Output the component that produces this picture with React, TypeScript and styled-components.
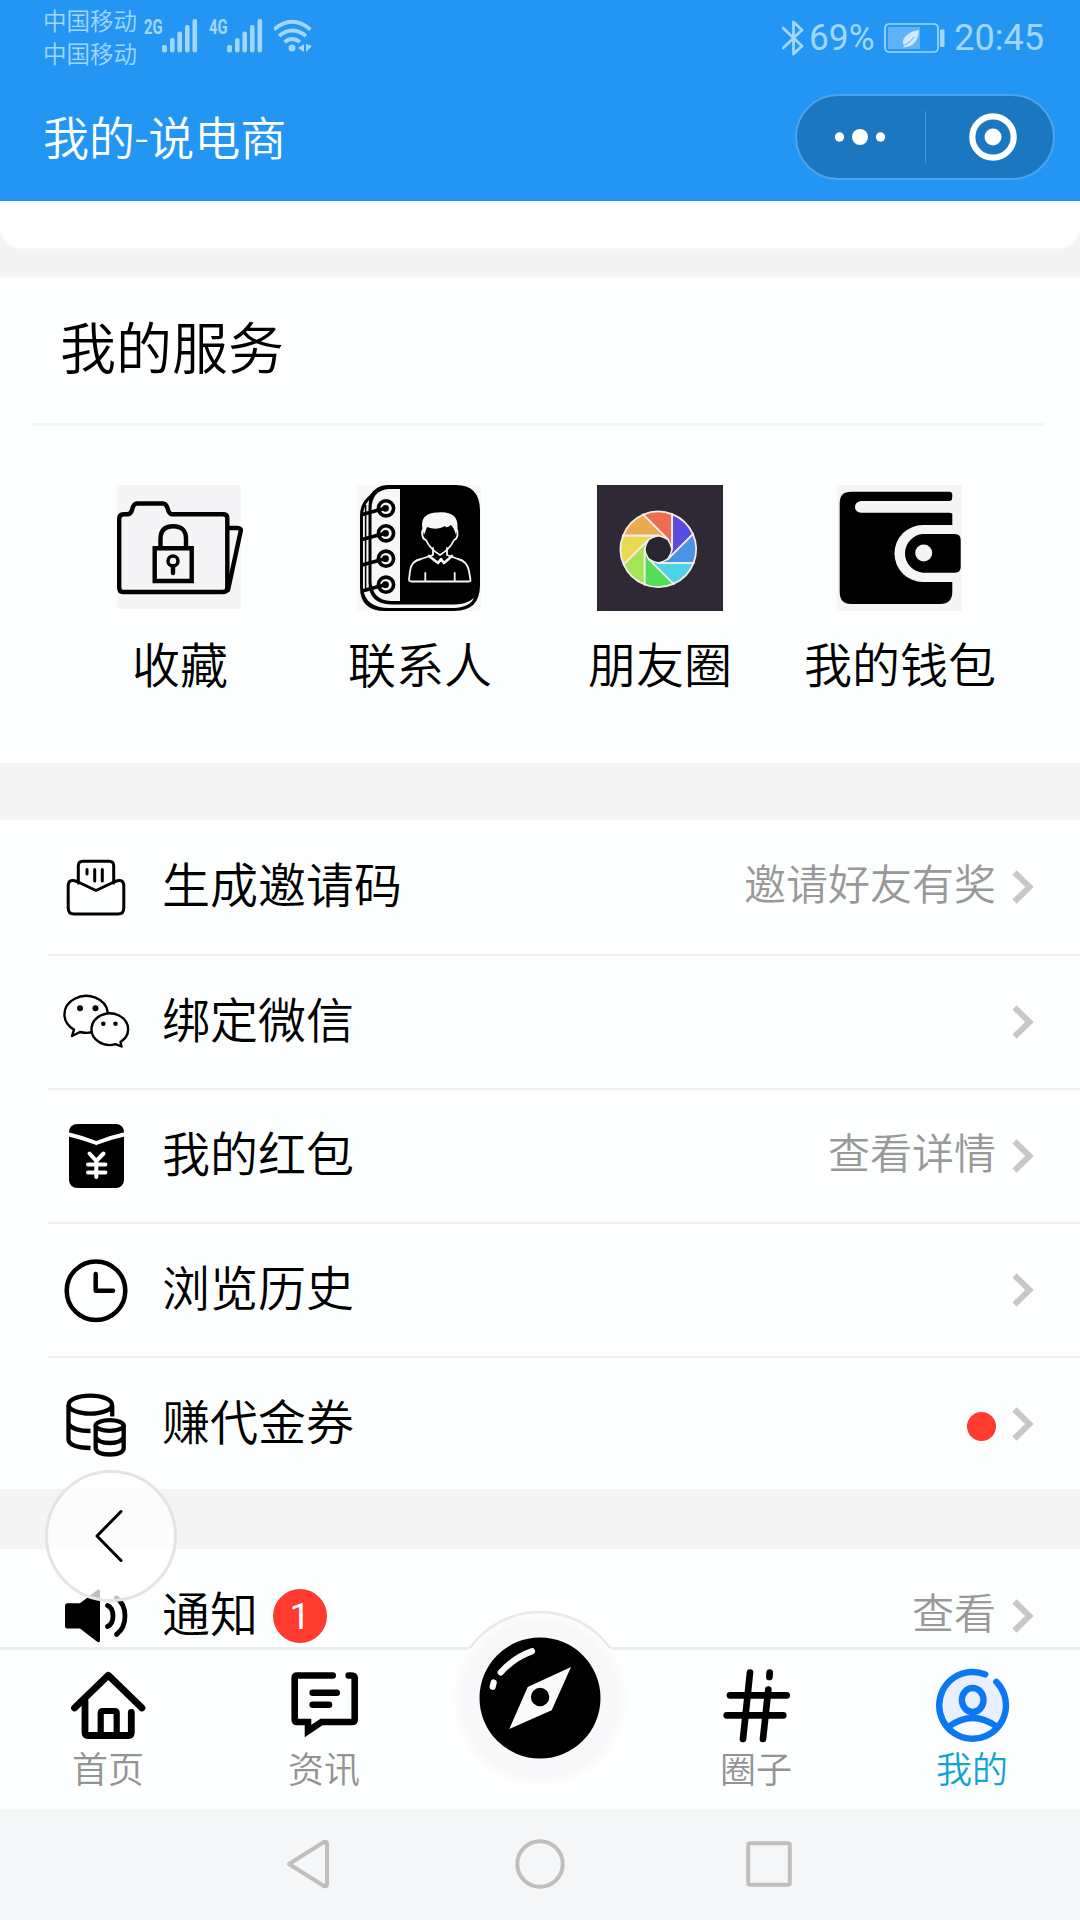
import React from "react";
import styled, { createGlobalStyle } from "styled-components";

const GlobalStyle = createGlobalStyle`
  * { box-sizing: border-box; }
  body { margin: 0; background: #fff; }
  svg { display: block; flex: none; }
`;

const STATUS = "#a3d6fb";

const Page = styled.div`
  position: relative;
  display: flex;
  flex-direction: column;
  width: 1080px;
  height: 1920px;
  overflow: hidden;
  background: #fdfefe;
  color: #000;
  font-family: Roboto, "Noto Sans CJK SC", sans-serif;
  font-weight: 350;
`;

const Header = styled.header`
  flex: none;
  height: 201px;
  background: #2396f3;
`;

const StatusBar = styled.div`
  display: flex;
  align-items: flex-start;
  height: 74px;
  padding: 0 36px 0 43px;
  color: ${STATUS};
`;

const Carriers = styled.div`
  display: flex;
  flex-direction: column;
  width: 101px;
  padding-top: 6px;
  font-size: 23.5px;
  line-height: 33px;
`;

const Network = styled.div`
  display: flex;
  width: 65px;
  padding-top: 19px;
`;

const NetworkType = styled.span`
  width: 18px;
  font-family: "Liberation Sans Narrow", Roboto, sans-serif;
  font-size: 20px;
  font-weight: 700;
  line-height: 16px;
  white-space: nowrap;
  transform: scaleX(0.74);
  transform-origin: left;
`;

const StatusRight = styled.div`
  display: flex;
  align-items: center;
  margin-left: auto;
  height: 76px;
  font-size: 36px;
  font-weight: 400;
  line-height: 42px;
`;

const Percent = styled.span`
  width: 75px;
  margin-left: 5px;
  transform: scaleX(0.98);
  transform-origin: left;
`;

const Clock = styled.span`
  margin-left: 9px;
`;

const TitleBar = styled.div`
  display: flex;
  align-items: center;
  justify-content: space-between;
  height: 125px;
  padding: 0 25px 0 43px;
`;

const Title = styled.h1`
  margin: 4px 0 0;
  color: #fff;
  font-size: 46px;
  font-weight: 350;
  line-height: 60px;
`;

const Capsule = styled.div`
  display: flex;
  align-items: center;
  width: 260px;
  height: 86px;
  border: 2px solid #4ca4ea;
  border-radius: 43px;
  background: #1b77c0;
`;

const CapsuleDivider = styled.i`
  width: 1px;
  height: 52px;
  background: #4a97d4;
`;

const CapsuleHalf = styled.div<{ $width: number; $start: number }>`
  display: flex;
  width: ${(p) => p.$width}px;
  padding-left: ${(p) => p.$start}px;
`;

const Content = styled.main`
  flex: 1;
  min-height: 0;
  overflow: hidden;
`;

const CardEnd = styled.div`
  height: 77px;
  background: #f3f3f3;
`;

const CardEndInner = styled.div`
  height: 47px;
  border-radius: 0 0 22px 22px;
  background: #fff;
  box-shadow: 0 1px 4px #fafafa;
`;

const Services = styled.section`
  height: 485px;
  background: #fdfefe;
  box-shadow: 0 -2px 5px #fafafa;
`;

const ServicesTitle = styled.h2`
  display: flex;
  align-items: center;
  height: 148px;
  margin: 0 36px 0 32px;
  padding: 0 0 13px 28px;
  border-bottom: 3px solid #f3f4f6;
  font-size: 56px;
  font-weight: 350;
`;

const ServiceGrid = styled.div`
  display: grid;
  grid-template-columns: repeat(4, 240px);
  padding: 59px 60px 0;
`;

const Service = styled.div`
  display: flex;
  flex-direction: column;
  align-items: center;
  gap: 21px;
  font-size: 48px;
  line-height: 70px;
  white-space: nowrap;
`;

const Gap = styled.div<{ $h: number }>`
  height: ${(p) => p.$h}px;
  background: #f4f4f4;
`;

const List = styled.section`
  height: 669px;
  overflow: hidden;
`;

const Row = styled.div`
  display: flex;
  align-items: center;
  height: 134px;
  margin-left: 48px;
  padding: 0 46px 0 12px;
  & + & {
    border-top: 2px solid #efeff2;
  }
  & > svg:first-child {
    margin-bottom: 2px;
  }
`;

const RowLabel = styled.span`
  margin-left: 30px;
  padding-bottom: 1px;
  font-size: 48px;
  line-height: 70px;
`;

const RowNote = styled.span`
  margin: 0 16px 3px auto;
  color: #999;
  font-size: 42px;
  line-height: 60px;
`;

const Dot = styled.i`
  width: 29px;
  height: 29px;
  margin: 5px 16px 0 auto;
  border-radius: 50%;
  background: #ff3a2f;
`;

const Badge = styled.span`
  display: flex;
  align-items: center;
  justify-content: center;
  width: 54px;
  height: 54px;
  margin-left: 15px;
  border-radius: 50%;
  background: #ff3a2f;
  color: #fff;
  font-size: 37px;
  font-weight: 400;
`;

const TabBar = styled.nav`
  position: relative;
  display: grid;
  flex: none;
  grid-template-columns: repeat(5, 216px);
  height: 162px;
  border-top: 3px solid #ebecee;
  background: #fdfefe;
`;

const Tab = styled.div<{ $active?: boolean }>`
  display: flex;
  flex-direction: column;
  gap: 1px;
  align-items: center;
  padding-top: 18px;
  color: ${(p) => (p.$active ? "#12a4d4" : "#939393")};
  font-size: 36px;
  line-height: 52px;
`;

const CompassTab = styled.div`
  display: flex;
  justify-content: center;
  margin-top: -39px;
`;

const SystemNav = styled.footer`
  display: grid;
  flex: none;
  grid-template-columns: 1fr 102px 1fr;
  align-items: center;
  height: 111px;
  padding-bottom: 2px;
  background: #f5f6f8;
`;

const NavCell = styled.div<{ $align: string; $inset: number }>`
  display: flex;
  justify-content: ${(p) => p.$align};
  padding: 0 ${(p) => p.$inset}px;
`;

const BackBubble = styled.button`
  position: absolute;
  left: 45px;
  top: 1470px;
  display: flex;
  align-items: center;
  justify-content: center;
  width: 132px;
  height: 132px;
  padding: 0 4px 0 0;
  border: 3px solid #e4e4e4;
  border-radius: 50%;
  background: rgba(255, 255, 255, 0.74);
`;

const line = {
  fill: "none",
  strokeLinecap: "round" as const,
  strokeLinejoin: "round" as const,
};

const Signal = () => (
  <svg width="36" height="34" fill={STATUS}>
    <rect x="0" y="26" width="5" height="7.5" rx="2" />
    <rect x="8" y="19" width="4.6" height="14.5" rx="2" />
    <rect x="15.4" y="12.5" width="4.6" height="21" rx="2" />
    <rect x="23" y="6" width="4.6" height="27.5" rx="2" />
    <rect x="30.5" y="0" width="4.6" height="33.5" rx="2" />
  </svg>
);

const WifiIcon = () => (
  <svg width="42" height="54" viewBox="273 0 42 54">
    <g stroke={STATUS} strokeWidth="3.8" fill="none">
      <path d="M273 29.5Q291 14 309.5 29.5" />
      <path d="M278 36Q291 25 305 36" />
      <path d="M283.5 42Q291 36 299 42" />
    </g>
    <circle cx="291" cy="48" r="3.5" fill={STATUS} />
    <path d="M303 44v8l-6-4zM305 44v8l6-6z" fill={STATUS} />
  </svg>
);

const BluetoothIcon = () => (
  <svg width="22" height="36" viewBox="0 0 22 36">
    <path d="M1 8L20 26 11.5 34V2L20 10 1 28" stroke={STATUS} strokeWidth="2.8" {...line} />
  </svg>
);

const BatteryIcon = () => (
  <svg width="61" height="30" viewBox="0 0 61 30">
    <rect x="1" y="1" width="53" height="28" rx="4" fill="none" stroke={STATUS} strokeWidth="1.7" />
    <rect x="4" y="4" width="32" height="22" fill="#5db2f8" />
    <rect x="56" y="6.5" width="4.5" height="17.5" rx="1" fill={STATUS} />
    <path d="M35 7C28 8 20 12 19 18Q18 21 21 22L19 24Q22 25 28 22 35 17 35 7z" fill="#d0eafd" />
    <path d="M21 22Q27 19 30 14" stroke="#5db2f8" fill="none" />
  </svg>
);

const FolderIcon = () => (
  <svg width="126" height="126" viewBox="0 0 126 126">
    <path d="M0 0H124V124H0z" fill="#f5f5f7" />
    <g stroke="#000" strokeWidth="4.4" {...line}>
      <path d="M2.2 34Q2.2 29.3 6.5 29.3H10Q14 29.3 15 25Q16.5 18.5 20 18.5H46Q49 18.5 50.5 23Q52 29.3 55 29.3H106Q110.3 29.3 110.3 33V103Q110.3 107 106 107H6Q2.2 107 2.2 102.5z" />
      <path d="M111 43H120Q125 43 123.5 47L111 105" />
      <path d="M37.7 63.3H74.7V96H37.7z" strokeLinejoin="miter" />
      <path d="M43.5 63V54Q43.5 41.3 56.3 41.3T69 54V63" />
      <circle cx="56" cy="76" r="5" strokeWidth="3.5" />
      <path d="M56 81V88" />
    </g>
  </svg>
);

const ContactsIcon = () => (
  <svg width="126" height="126" viewBox="0 0 126 126">
    <path d="M0 0H124V126H0z" fill="#f7f7f8" />
    <path d="M30 0H99Q123 0 123 26V100Q123 126 97 126H28Q3 126 3 102V30Q3 18 13 10Q20 0 30 0z" fill="#000" />
    <path d="M12 15Q6 21 6 32V104Q9 123 32 123H97Q113 122 117 113Q109 119.5 98 119.5H34Q12 119 11.5 98V22z" fill="#f7f7f8" />
    <path d="M8.6 20V104" stroke="#000" strokeWidth="1.6" fill="none" />
    <path d="M43 4H32Q15 5 14.5 24V96Q15 115 34 116H43z" fill="#f7f7f8" />
    {[23.3, 48.3, 73.7, 99.7].map((y) => (
      <g key={y} stroke="#000" strokeWidth="3.6" strokeLinecap="round" fill="none">
        <circle cx="29" cy={y} r="7.6" />
        <path d={`M6 ${y + 6}L28 ${y}`} />
        <circle cx="28.5" cy={y} r="1.6" />
      </g>
    ))}
    <g stroke="#f7f7f8" strokeWidth="1.8" {...line}>
      <path d="M67 44Q64 45 65.5 51 66 54 69 55 73 64 83 70 93 64 97 55 100 54 100.5 50 101 46 99.5 44" />
      <path d="M76 63V70L64 74Q54 76 53 86L52 95Q52 96 54 96.5H112Q114 96 113.5 95L112 86Q110 76 101 74L90 70V63" />
      <path d="M72 71L81 78 84 74 87 78 95 71" strokeWidth="2.6" />
      <path d="M68.3 88V96M97.7 88V96" />
    </g>
    <path d="M67 50Q65 44 65 40 65 28 80 27.5 91 26 97 31 101 35 100.5 43L99 50Q97 43 94 40 89 44 88 41 80 46 70 42 69 45 67 50z" fill="#f7f7f8" />
  </svg>
);

const BLADES = ["#ee6d50", "#5b4ce0", "#4c93e8", "#4dd2e6", "#52df55", "#a6e356", "#ead94e", "#eaaa50"];

const MomentsIcon = () => {
  const cx = 61.3;
  const cy = 64.3;
  const R = 37.8;
  const r = 13.8;
  const len = Math.sqrt(R * R - r * r);
  const edge = (deg: number) => {
    const a = (deg * Math.PI) / 180;
    const tx = cx + r * Math.cos(a);
    const ty = cy + r * Math.sin(a);
    return { t: `${tx} ${ty}`, e: `${tx + len * Math.sin(a)} ${ty - len * Math.cos(a)}` };
  };
  return (
    <svg width="126" height="126" viewBox="0 0 126 126">
      <path d="M0 0H126V126H0z" fill="#2f2935" />
      {BLADES.map((color, i) => {
        const a = edge(i * 45);
        const b = edge(i * 45 - 45);
        return (
          <path
            key={color}
            d={`M${a.t}L${a.e}A${R} ${R} 0 0 0 ${b.e}L${b.t}z`}
            fill={color}
            stroke="#f3eee8"
            strokeWidth="1.8"
          />
        );
      })}
      <circle cx={cx} cy={cy} r="12.3" fill="#2a2630" />
    </svg>
  );
};

const WalletIcon = () => (
  <svg width="126" height="126" viewBox="0 0 126 126">
    <path d="M0 0H125V126H0z" fill="#f5f5f6" />
    <path d="M14 6.7H112Q115.3 6.7 115.3 10V107Q115.3 119 103 119H14Q2.7 119 2.7 107V18Q2.7 6.7 14 6.7z" />
    <path d="M24 16H112Q115.5 16 115.5 12H118V31Q115.5 27.7 112 27.7H24Q18 27 18 22T24 16z" fill="#f5f5f6" />
    <path d="M118 40H86A28.5 28.5 0 0 0 86 97H118z" fill="#f5f5f6" />
    <path d="M86 49H118Q123.7 49 123.7 55V82Q123.7 87.7 118 87.7H86A19.4 19.4 0 0 1 86 49z" />
    <circle cx="86.7" cy="68" r="8.5" fill="#f5f5f6" />
  </svg>
);

const RowIcon = ({ children }: { children: React.ReactNode }) => (
  <svg width="72" height="72" viewBox="0 0 72 72">
    {children}
  </svg>
);

const InviteIcon = () => (
  <RowIcon>
    <g stroke="#000" strokeWidth="3" {...line}>
      <path d="M18.3 33V16Q18.3 11.2 23 11.2H49Q53.7 11.2 53.7 16V33" />
      <path d="M36 40.5L17 31.5Q8.2 28 8.2 36V58Q8.2 64 14 64H58Q63.8 64 63.8 58V36Q63.8 28 55 31.5z" />
      <path d="M27 19.5V24M34.7 19.5V31M42.3 19.5V31" />
    </g>
  </RowIcon>
);

const WechatIcon = () => (
  <RowIcon>
    <g stroke="#000" strokeWidth="2.4" strokeLinejoin="round" fill="#fdfefe">
      <path d="M14 44.6L12 51 20 47A21.7 18.4 0 1 0 14 44.6z" />
      <path d="M60.5 57L61.5 61.5 55.5 59.2A18.3 15.8 0 1 1 60.5 57z" />
    </g>
    <circle cx="20" cy="23.3" r="3" />
    <circle cx="35.5" cy="23.3" r="3" />
    <circle cx="43.3" cy="38.7" r="2.3" />
    <circle cx="55.5" cy="38.7" r="2.3" />
  </RowIcon>
);

const RedPacketIcon = () => (
  <RowIcon>
    <rect x="9" y="5" width="55" height="64" rx="8" />
    <path d="M7 15Q22 18.5 36.3 24 50 18.5 66 15" stroke="#fff" strokeWidth="4" fill="none" />
    <path d="M29.5 34.5L36.3 42 43.5 34.5M36.3 42V58M28 45.5H45.5M28 53.5H45.5" stroke="#fff" strokeWidth="4" {...line} />
  </RowIcon>
);

const HistoryIcon = () => (
  <RowIcon>
    <g stroke="#000" strokeWidth="4.5" {...line}>
      <circle cx="36" cy="37.7" r="29.3" />
      <path d="M35.7 21V37.7H53" />
    </g>
  </RowIcon>
);

const CoinsIcon = () => (
  <RowIcon>
    <g stroke="#000" strokeWidth="4.3" fill="none">
      <ellipse cx="30.3" cy="17.7" rx="21.7" ry="9" />
      <path d="M8.5 18V53Q10 60.5 30.5 61M52.2 18V29.5M8.5 37Q13 44 30.5 44" />
      <ellipse cx="49.7" cy="38.5" rx="14" ry="5.3" />
      <path d="M35.7 38V61.5Q37 67.5 49.7 67.5T63.7 61.5V38M35.7 50Q38 56 49.7 56T63.7 50" />
    </g>
  </RowIcon>
);

const SpeakerIcon = () => (
  <RowIcon>
    <path d="M7 24.3H20L38 10.5Q40 10 40 12V61Q40 64 37.5 63L20 49.5H7Q5 49.5 5 47V27Q5 24.3 7 24.3z" />
    <path d="M47.5 26.5Q53 29 53 37T47.5 47.5M56.5 19Q65 25 65 37T56.5 55.5" stroke="#000" strokeWidth="4.8" {...line} />
  </RowIcon>
);

const Chevron = () => (
  <svg width="22" height="36" viewBox="0 0 22 36">
    <path d="M2.5 3.5L17.5 18 2.5 32.5" stroke="#c8c8ca" strokeWidth="6" fill="none" />
  </svg>
);

const HomeIcon = () => (
  <svg width="76" height="76" viewBox="0 0 76 76">
    <g stroke="#000" strokeWidth="6.8" {...line}>
      <path d="M4.5 40L38.3 7.3 72 40" />
      <path d="M15 33V64.5Q15 67.5 18 67.5H58.3Q61.3 67.5 61.3 64.5V44.5" />
      <path d="M30.7 66V45Q30.7 43 33 43H44.5Q46.7 43 46.7 45V66" strokeWidth="6.2" />
    </g>
  </svg>
);

const NewsIcon = () => (
  <svg width="76" height="76" viewBox="0 0 76 76">
    <g stroke="#000" strokeWidth="6.6" {...line}>
      <path d="M46.7 7.5H11Q8.7 7.5 8.7 10V51.5Q8.7 54 11 54H22V63L35.5 54H66Q68.7 54 68.7 51.5V10Q68.7 7.5 66 7.5H62.7" strokeLinejoin="miter" />
      <path d="M26.7 24.7H50.7M26.7 36.7H43" />
    </g>
  </svg>
);

const HashIcon = () => (
  <svg width="76" height="76" viewBox="0 0 76 76">
    <path
      d="M32 4.5L25 71M51.7 4.5L51.4 9M50.3 21.5L45 71M12 27.3H68.7M8.7 47.3H65.3"
      stroke="#000"
      strokeWidth="6.7"
      {...line}
    />
  </svg>
);

const MineIcon = () => (
  <svg width="76" height="76" viewBox="0 0 76 76">
    <circle cx="39.5" cy="38.5" r="32" fill="#e9effc" />
    <path d="M16 60Q38.7 40 61.5 60 52 69 38.7 70 25 69 16 60z" fill="#f8fafe" />
    <g stroke="#0b78f2" strokeWidth="6.4" {...line}>
      <path d="M51.2 6.4A33.4 33.4 0 1 0 62.3 13.8" />
      <ellipse cx="38.7" cy="32" rx="10.8" ry="12" />
      <path d="M15 58.5Q38.7 41.5 62.5 58.5" />
    </g>
  </svg>
);

const CompassIcon = () => (
  <svg width="180" height="180" viewBox="-3 0 180 180">
    <defs>
      <radialGradient id="halo">
        <stop offset="0.88" stopColor="#f8f8fa" />
        <stop offset="1" stopColor="#fcfdfd" />
      </radialGradient>
    </defs>
    <circle cx="87" cy="88" r="87" fill="url(#halo)" />
    <path d="M17 37A86 86 0 0 1 157 37" stroke="#e8e8ea" strokeWidth="2.5" fill="none" />
    <circle cx="87" cy="87" r="60.5" />
    <path fillRule="evenodd" d="M118 56L98.7 99.3 56.3 118 74.7 76zM96.3 86A9.2 9.2 0 1 0 77.9 86A9.2 9.2 0 1 0 96.3 86z" fill="#fafafb" />
    <path d="M47.7 61.5Q61 46.5 79 40.2M40.7 71.5L39.7 75.8" stroke="#fafafb" strokeWidth="6.2" {...line} />
  </svg>
);

const services = [
  { label: "收藏", Icon: FolderIcon },
  { label: "联系人", Icon: ContactsIcon },
  { label: "朋友圈", Icon: MomentsIcon },
  { label: "我的钱包", Icon: WalletIcon },
];

const rows = [
  { label: "生成邀请码", Icon: InviteIcon, note: "邀请好友有奖" },
  { label: "绑定微信", Icon: WechatIcon },
  { label: "我的红包", Icon: RedPacketIcon, note: "查看详情" },
  { label: "浏览历史", Icon: HistoryIcon },
  { label: "赚代金券", Icon: CoinsIcon, dot: true },
];

export default function App() {
  return (
    <Page>
      <GlobalStyle />
      <Header>
        <StatusBar>
          <Carriers>
            <span>中国移动</span>
            <span>中国移动</span>
          </Carriers>
          <Network>
            <NetworkType>2G</NetworkType>
            <Signal />
          </Network>
          <Network>
            <NetworkType>4G</NetworkType>
            <Signal />
          </Network>
          <WifiIcon />
          <StatusRight>
            <BluetoothIcon />
            <Percent>69%</Percent>
            <BatteryIcon />
            <Clock>20:45</Clock>
          </StatusRight>
        </StatusBar>
        <TitleBar>
          <Title>我的-说电商</Title>
          <Capsule>
            <CapsuleHalf $width={128} $start={37}>
              <svg width="52" height="18" fill="#fff">
                <circle cx="5.5" cy="9" r="4.7" />
                <circle cx="26" cy="9" r="8" />
                <circle cx="46.5" cy="9" r="4.7" />
              </svg>
            </CapsuleHalf>
            <CapsuleDivider />
            <CapsuleHalf $width={127} $start={42}>
              <svg width="50" height="50">
                <circle cx="25" cy="25" r="20.7" fill="none" stroke="#fff" strokeWidth="6.2" />
                <circle cx="25" cy="25" r="8.5" fill="#fff" />
              </svg>
            </CapsuleHalf>
          </Capsule>
        </TitleBar>
      </Header>

      <Content>
        <CardEnd>
          <CardEndInner />
        </CardEnd>
        <Services>
          <ServicesTitle>我的服务</ServicesTitle>
          <ServiceGrid>
            {services.map(({ label, Icon }) => (
              <Service key={label}>
                <Icon />
                <span>{label}</span>
              </Service>
            ))}
          </ServiceGrid>
        </Services>
        <Gap $h={57} />
        <List>
          {rows.map(({ label, Icon, note, dot }) => (
            <Row key={label}>
              <Icon />
              <RowLabel>{label}</RowLabel>
              {dot ? <Dot /> : <RowNote>{note}</RowNote>}
              <Chevron />
            </Row>
          ))}
        </List>
        <Gap $h={60} />
        <Row>
          <SpeakerIcon />
          <RowLabel>通知</RowLabel>
          <Badge>1</Badge>
          <RowNote>查看</RowNote>
          <Chevron />
        </Row>
      </Content>

      <BackBubble aria-label="返回">
        <svg width="30" height="54" viewBox="0 0 30 54">
          <path d="M27 2.5L3 27 27 51.5" stroke="#000" strokeWidth="3" {...line} />
        </svg>
      </BackBubble>

      <TabBar>
        <Tab>
          <HomeIcon />
          首页
        </Tab>
        <Tab>
          <NewsIcon />
          资讯
        </Tab>
        <CompassTab>
          <CompassIcon />
        </CompassTab>
        <Tab>
          <HashIcon />
          圈子
        </Tab>
        <Tab $active>
          <MineIcon />
          我的
        </Tab>
      </TabBar>

      <SystemNav>
        <NavCell $align="flex-end" $inset={159}>
          <svg width="44" height="50" viewBox="0 0 44 50">
            <path d="M3 25L38 3Q41 2 41 5V45Q41 48 38 47z" stroke="#bfbfbf" strokeWidth="4" {...line} />
          </svg>
        </NavCell>
        <NavCell $align="center" $inset={0}>
          <svg width="50" height="50">
            <circle cx="25" cy="25" r="22.7" fill="none" stroke="#bfbfbf" strokeWidth="4" />
          </svg>
        </NavCell>
        <NavCell $align="flex-start" $inset={155}>
          <svg width="46" height="46">
            <rect x="2.2" y="2.2" width="41.6" height="41.6" rx="2" fill="none" stroke="#bfbfbf" strokeWidth="4" />
          </svg>
        </NavCell>
      </SystemNav>
    </Page>
  );
}
